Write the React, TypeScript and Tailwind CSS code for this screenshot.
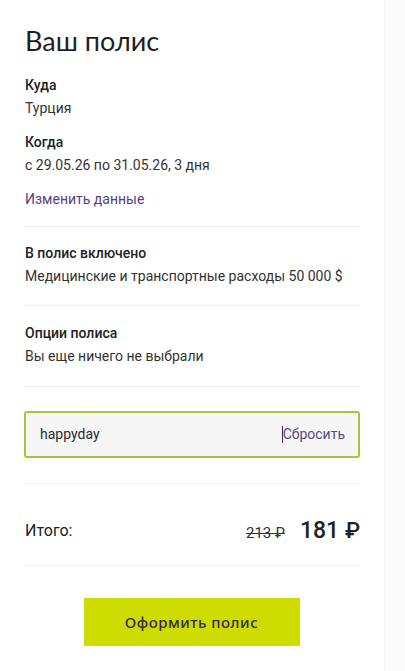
import { useState } from 'react';

const body = "font-['Roboto','Liberation_Sans',sans-serif]";
const display = "font-['Lato','Noto_Sans',sans-serif]";

function InfoBlock({ title, value }: { title: string; value: string }) {
    return (
        <div>
            <div className="text-[14px] leading-[23px] font-medium text-[#222]">{title}</div>
            <div className="text-[14px] leading-[23px] text-[#333]">{value}</div>
        </div>
    );
}

export default function App() {
    const [promo] = useState('happyday');

    return (
        <div className={`flex min-h-[671px] w-full bg-white ${body}`}>
            <div className="w-[384px] shrink-0 bg-white">
                <div className="px-[24px]">
                    <h1 className={`mt-[25px] pl-[1px] text-[27px] leading-[32px] font-normal text-[#1f1f1f] ${display}`}>
                        Ваш полис
                    </h1>

                    <div className="mt-[17px] flex flex-col gap-[11px] pl-[1px]">
                        <InfoBlock title="Куда" value="Турция" />
                        <InfoBlock title="Когда" value="с 29.05.26 по 31.05.26, 3 дня" />
                        <a className="text-[14px] leading-[23px] text-[#5b3e7c]" href="#">
                            Изменить данные
                        </a>
                    </div>

                    <div className="mt-[15px] border-t border-[#ebebeb] pt-[15px] pb-[17px] pl-[1px]">
                        <InfoBlock title="В полис включено" value="Медицинские и транспортные расходы 50 000 $" />
                    </div>

                    <div className="border-t border-[#ebebeb] pt-[16px] pb-[18px] pl-[1px]">
                        <InfoBlock title="Опции полиса" value="Вы еще ничего не выбрали" />
                    </div>

                    <div className="border-t border-[#ebebeb] pt-[24px] pb-[25px]">
                        <div className="flex h-[47px] items-center justify-between rounded-[3px] border-2 border-[#a9c43c] bg-[#f5f5f5] pl-[14px] pr-[13px]">
                            <span className="text-[14px] text-[#2a2a2a]">{promo}</span>
                            <span className="flex items-center text-[14px] text-[#5b4a78]">
                                <span className="h-[17px] w-[1px] bg-[#3b2d5a]" />
                                Сбросить
                            </span>
                        </div>
                    </div>

                    <div className="flex items-center justify-between border-t border-[#f2f2f2] pt-[27px] pb-[14px] pl-[1px]">
                        <span className="text-[16px] leading-[40px] text-[#222]">Итого:</span>
                        <div className="flex items-baseline gap-[15px]">
                            <span className="text-[15px] text-[#333] line-through">213 ₽</span>
                            <span className="text-[23px] leading-[40px] font-medium text-[#222]">
                                181 <span className="text-[22px]">₽</span>
                            </span>
                        </div>
                    </div>

                    <div className="flex justify-center border-t border-[#f0f0f0] pt-[32px]">
                        <button className="ml-[-1px] h-[48px] w-[216px] bg-[#cfdc00] text-[15px] font-medium tracking-[0.5px] text-[#3b2a2a] font-['Noto_Sans','Lato',sans-serif]">
                            Оформить полис
                        </button>
                    </div>
                </div>
            </div>
            <div className="flex-1 border-l border-[#f3f3f3] bg-[#fbfbfb]" />
        </div>
    );
}
